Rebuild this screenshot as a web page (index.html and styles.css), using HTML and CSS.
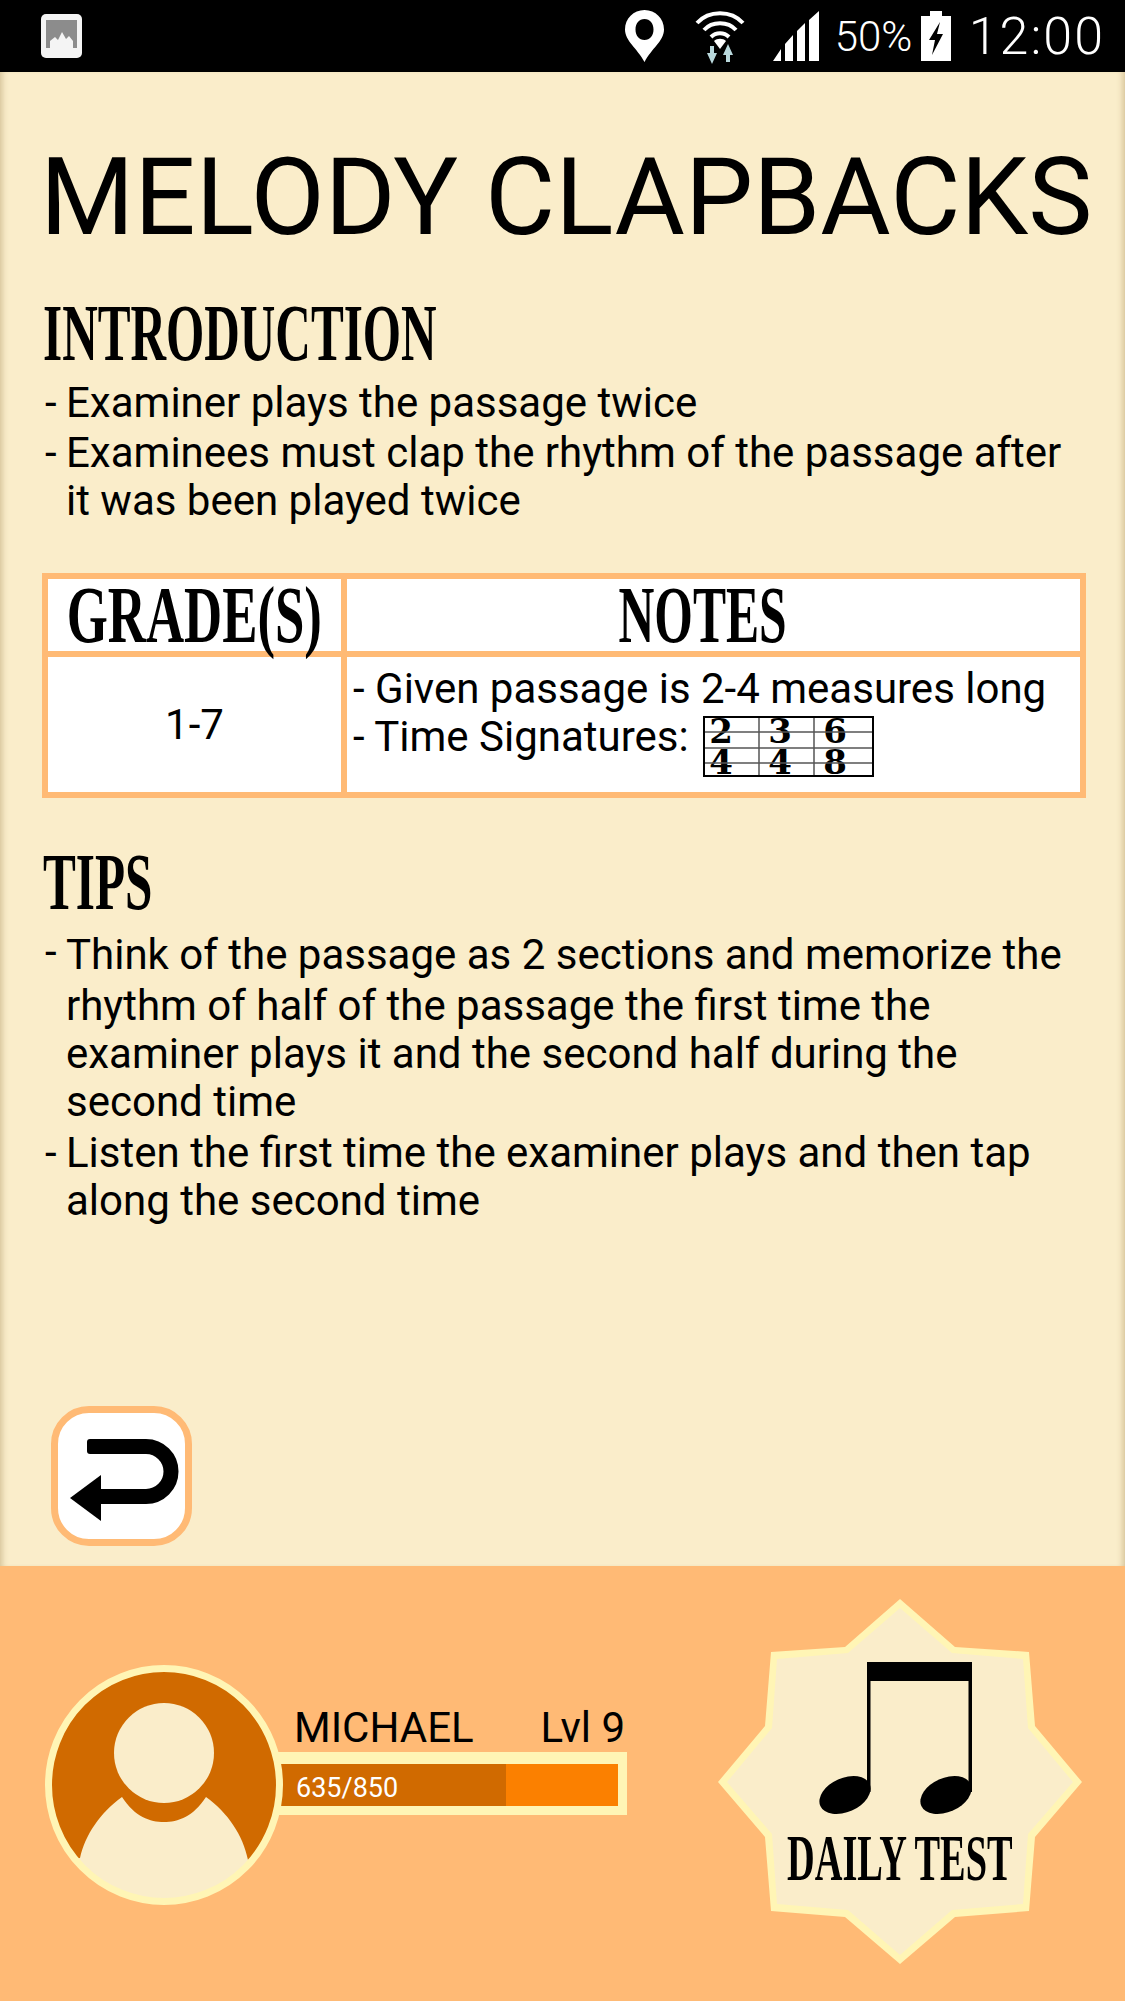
FILE: index.html
```html
<!DOCTYPE html>
<html lang="en">
<head>
    <meta charset="UTF-8">
    <meta name="viewport" content="width=device-width, initial-scale=1.0">
    <title>Melody Clapbacks</title>
    <link rel="stylesheet" href="styles.css">
</head>
<body>
    <header class="status-bar">
        <svg class="status-image" viewBox="0 0 41 44">
            <rect width="41" height="44" rx="5" fill="#f4f4f4"/>
            <rect x="5" y="6" width="31" height="28" fill="#8c8c8c"/>
            <path d="M9 34V27L14 23L17 26L21 18L25 25L28 22L32 27V34Z" fill="#f4f4f4"/>
        </svg>
        <div class="status-right">
            <svg class="status-pin" viewBox="0 0 39 52">
                <path fill-rule="evenodd" d="M19.5 0C8.5 0 0 8.500 0 19.500C0 31 12 38 19.500 52C27 38 39 31 39 19.500C39 8.500 30.500 0 19.500 0ZM19.500 9C25 9 28.500 13.500 28.500 19.500C28.500 25.500 25 30 19.500 30C14 30 10.500 25.500 10.500 19.500C10.500 13.500 14 9 19.500 9Z" fill="#fff"/>
            </svg>
            <svg class="status-wifi" viewBox="0 0 52 56">
                <g fill="none" stroke="#fff" stroke-width="4">
                    <path d="M3 15C15 2 37 2 49 15"/>
                    <path d="M10 22C18 13 34 13 42 22"/>
                    <path d="M17 29C22 24 30 24 35 29"/>
                </g>
                <path d="M20 33C23 30 29 30 32 33L26 41Z" fill="#fff"/>
                <path d="M18 56L13 45H16V38H20V45H23Z" fill="#b9d8dc"/>
                <path d="M34 36L39 47H36V54H32V47H29Z" fill="#b9d8dc"/>
            </svg>
            <svg class="status-signal" viewBox="0 0 50 50">
                <path d="M0 50L8 38V50ZM12 33L20 24V50H12ZM24 20L32 12V50H24ZM36 9L46 0V50H36Z" fill="#fff"/>
            </svg>
            <span class="status-battery-text">50%</span>
            <svg class="status-battery" viewBox="0 0 30 50">
                <path fill-rule="evenodd" d="M9 0H21V5H30V50H0V5H9ZM19 11L8 29H14L11 44L22 23H16Z" fill="#fff"/>
            </svg>
            <span class="status-time">12:00</span>
        </div>
    </header>

    <main class="lesson">
        <h1 class="lesson-title">MELODY CLAPBACKS</h1>

        <h2 class="section-title"><span>INTRODUCTION</span></h2>
        <ul class="dash-list">
            <li>Examiner plays the passage twice</li>
            <li>Examinees must clap the rhythm of the passage after it was been played twice</li>
        </ul>

        <table class="grades">
            <thead>
                <tr>
                    <th class="col-grade"><span>GRADE(S)</span></th>
                    <th class="col-notes"><span>NOTES</span></th>
                </tr>
            </thead>
            <tbody>
                <tr>
                    <td class="col-grade">1-7</td>
                    <td class="notes-cell">
                        <div>- Given passage is 2-4 measures long</div>
                        <div class="signature-row">- Time Signatures:
                            <svg class="signatures" viewBox="0 0 171 61">
                                <g font-family="DejaVu Serif" font-weight="700" font-size="34" text-anchor="middle" fill="#000">
                                    <text x="18" y="27">2</text>
                                    <text x="18" y="58">4</text>
                                    <text x="77" y="27">3</text>
                                    <text x="77" y="58">4</text>
                                    <text x="132" y="27">6</text>
                                    <text x="132" y="58">8</text>
                                </g>
                                <g stroke="#555" stroke-width="1.500">
                                    <path d="M0 16H171M0 32H171M0 47H171"/>
                                    <path d="M56 0V61M111 0V61"/>
                                </g>
                                <rect x="1" y="1" width="169" height="59" fill="none" stroke="#000" stroke-width="2"/>
                            </svg>
                        </div>
                    </td>
                </tr>
            </tbody>
        </table>

        <h2 class="section-title tips-title"><span>TIPS</span></h2>
        <ul class="dash-list tips-list">
            <li>Think of the passage as 2 sections and memorize the rhythm of half of the passage the first time the examiner plays it and the second half during the second time</li>
            <li>Listen the first time the examiner plays and then tap along the second time</li>
        </ul>

        <button class="back-button" type="button" aria-label="Back">
            <svg viewBox="0 0 109 82">
                <path d="M22 7.500H76A25 25 0 0 1 76 57.500H30" fill="none" stroke="#000" stroke-width="15"/>
                <rect x="17" y="0" width="12" height="15" rx="3"/>
                <path d="M0 59L31 36V82Z"/>
            </svg>
        </button>
    </main>

    <footer class="player-bar">
        <div class="player">
            <svg class="avatar" viewBox="0 0 238 240">
                <ellipse cx="119" cy="120" rx="115.500" ry="116.500" fill="#d06a00"/>
                <ellipse cx="119" cy="88" rx="50" ry="50" fill="#faedca"/>
                <path d="M30 194L35 193C40 170 55 148 77 132C90 152 105 157 119 157C133 157 148 152 161 132C183 148 198 170 203 195L208 194A115.500 116.500 0 0 1 30 194Z" fill="#faedca"/>
                <ellipse cx="119" cy="120" rx="115.500" ry="116.500" fill="none" stroke="#fff5b5" stroke-width="7"/>
            </svg>
            <div class="player-info">
                <div class="player-line">
                    <span>MICHAEL</span>
                    <span>Lvl 9</span>
                </div>
                <div class="xp-track">
                    <div class="xp-fill" style="width: 67.500%">635/850</div>
                </div>
            </div>
        </div>

        <div class="daily-test">
            <svg class="daily-badge" viewBox="0 0 400 400">
                <polygon points="200,9 255,57 329,62 335,136 382,192 335,247 329,321 255,327 200,374 145,327 71,321 65,247 18,192 65,136 71,62 145,57" fill="#fff5b5"/>
                <polygon points="200,18 252,63 323,69 328,138 373,192 328,244 323,314 252,320 200,365 148,320 77,314 72,244 27,192 72,138 77,69 148,63" fill="#faedca"/>
                <path d="M167 72H272V91H272V202H268.500V91H170.500V202H167Z"/>
                <ellipse cx="145" cy="205" rx="27" ry="17" transform="rotate(-24 145 205)"/>
                <ellipse cx="246" cy="205" rx="27" ry="17" transform="rotate(-24 246 205)"/>
            </svg>
            <span class="daily-label">DAILY TEST</span>
        </div>
    </footer>
</body>
</html>
```

FILE: styles.css
```css
* {
    box-sizing: border-box;
}
body {
    margin: 0;
    width: 1125px;
    height: 2001px;
    display: flex;
    flex-direction: column;
    font-family: 'Roboto', sans-serif;
    color: #000;
    background-color: #faedca;
    overflow: hidden;
}

/* status bar */
.status-bar {
    height: 72px;
    flex: none;
    background-color: #000;
    display: flex;
    justify-content: space-between;
    align-items: center;
    padding: 0 20px 0 41px;
}
.status-image {
    width: 41px;
    height: 44px;
}
.status-right {
    display: flex;
    align-items: center;
    color: #fff;
}
.status-pin {
    width: 39px;
    height: 52px;
}
.status-wifi {
    width: 52px;
    height: 56px;
    margin-left: 30px;
}
.status-signal {
    width: 50px;
    height: 50px;
    margin-left: 27px;
}
.status-battery-text {
    font-weight: 300;
    font-size: 42px;
    margin-left: 12px;
    width: 76px;
    white-space: nowrap;
}
.status-battery {
    width: 30px;
    height: 50px;
    margin-left: 10px;
}
.status-time {
    font-weight: 300;
    font-size: 52px;
    letter-spacing: 2px;
    margin-left: 18px;
}

/* lesson */
.lesson {
    flex: 1;
    display: flex;
    flex-direction: column;
    padding: 72px 39px 20px 42px;
    box-shadow: inset 7px 0 6px -5px rgba(120, 90, 30, 0.3), inset -7px 0 6px -5px rgba(120, 90, 30, 0.3);
}
.lesson-title {
    margin: 0 0 0 -2px;
    font-weight: 400;
    font-size: 108px;
    line-height: 106px;
    white-space: nowrap;
}
.section-title {
    margin: 50px 0 0 1px;
    height: 66px;
    line-height: 66px;
    font-family: 'Liberation Serif', serif;
    font-weight: 700;
    font-size: 80px;
}
.section-title span,
.daily-label {
    display: inline-block;
    transform: scaleX(0.615);
    transform-origin: left center;
}
.tips-title {
    margin-top: 51px;
}
.dash-list {
    margin: 13px 0 0;
    padding: 0 0 0 24px;
    list-style: none;
    font-size: 42px;
    line-height: 48px;
}
.dash-list li {
    position: relative;
    margin-bottom: 2px;
}
.dash-list li::before {
    content: "-";
    position: absolute;
    left: -21px;
}
.tips-list li {
    margin-bottom: 3px;
}
.tips-list li:first-child::first-line {
    line-height: 54px;
}

/* grades table */
.grades {
    margin-top: 46px;
    width: 1044px;
    height: 225px;
    border-collapse: collapse;
    table-layout: fixed;
    background-color: #fff;
    border: 6px solid #ffba75;
}
.grades th,
.grades td {
    border: 6px solid #ffba75;
    padding: 0;
}
.grades th {
    height: 78px;
    font-family: 'Liberation Serif', serif;
    font-weight: 700;
    font-size: 80px;
    line-height: 66px;
    text-align: center;
    white-space: nowrap;
}
.grades th span {
    display: inline-block;
    margin: 0 -100px;
    transform: scaleX(0.62);
}
.grades th.col-grade span {
    transform: scaleX(0.66);
}
.grades .col-notes {
    padding-right: 22px;
}
.col-grade {
    width: 299px;
}
.grades td {
    font-size: 42px;
    line-height: 48px;
    text-align: center;
}
.grades .notes-cell {
    text-align: left;
    padding: 8px 0 0 6px;
    vertical-align: top;
}
.signature-row {
    display: flex;
    align-items: flex-start;
    gap: 14px;
}
.signatures {
    width: 171px;
    height: 61px;
    flex: none;
    margin-top: 3px;
    overflow: visible;
}

/* back button */
.back-button {
    margin: auto 0 0 9px;
    width: 141px;
    height: 140px;
    padding: 8px 0 0 5px;
    background-color: #fff;
    border: 7px solid #ffba75;
    border-radius: 38px;
    display: flex;
    justify-content: center;
    align-items: center;
}
.back-button svg {
    width: 109px;
    height: 82px;
}

/* footer */
.player-bar {
    height: 435px;
    flex: none;
    background-color: #ffba75;
    position: relative;
    display: flex;
    justify-content: space-between;
    padding: 99px 25px 0 45px;
}
.player {
    display: flex;
    align-items: flex-start;
}
.avatar {
    width: 238px;
    height: 240px;
    position: relative;
    z-index: 1;
    flex: none;
}
.player-info {
    width: 344px;
    padding-top: 39px;
}
.player-line {
    display: flex;
    justify-content: space-between;
    padding: 0 2px 0 11px;
    font-size: 42px;
    line-height: 48px;
}
.xp-track {
    margin-left: -10px;
    height: 63px;
    width: 354px;
    background-color: #fb8000;
    border: 12px solid #fff5b5;
    border-left: 0;
    border-right-width: 9px;
    border-bottom-width: 9px;
}
.xp-fill {
    height: 100%;
    background-color: #d06a00;
    color: #fff;
    font-size: 27px;
    line-height: 48px;
    padding-left: 23px;
    white-space: nowrap;
}

.daily-test {
    width: 400px;
    height: 400px;
    position: absolute;
    top: 24px;
    right: 25px;
}
.daily-badge {
    width: 400px;
    height: 400px;
}
.daily-label {
    position: absolute;
    left: 87px;
    top: 243px;
    font-family: 'Liberation Serif', serif;
    font-weight: 700;
    font-size: 65px;
    line-height: 50px;
    white-space: nowrap;
    transform: scaleX(0.59);
}
```
